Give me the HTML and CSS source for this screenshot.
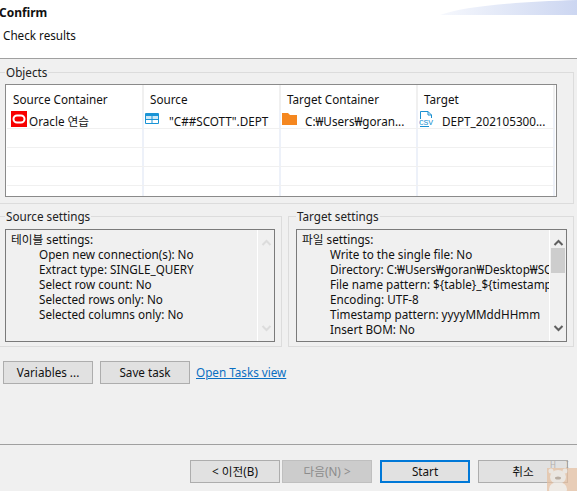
FILE: index.html
```html
<!DOCTYPE html>
<html lang="ko">
<head>
	<meta charset="utf-8">
	<title>Confirm</title>
	<link rel="stylesheet" href="styles.css">
</head>
<body>
	<!-- Wizard header -->
	<header class="head">
		<svg class="head-art" width="137" height="15" viewBox="0 0 137 15">
			<defs>
				<linearGradient id="swoosh" x1="0" y1="0" x2="1" y2="0">
					<stop offset="0" stop-color="#f6f8fd"/>
					<stop offset="1" stop-color="#ccd6f1"/>
				</linearGradient>
			</defs>
			<path d="M0 15C22 7 70 2 137 0V15Z" fill="url(#swoosh)"/>
		</svg>
		<div class="head-title">Confirm</div>
		<div class="head-sub">Check results</div>
	</header>

	<main class="body">
		<fieldset class="group group-objects">
			<legend>Objects</legend>
			<div class="grid">
				<div class="grid-row grid-head">
					<div class="cell">Source Container</div>
					<div class="cell">Source</div>
					<div class="cell">Target Container</div>
					<div class="cell">Target</div>
				</div>
				<div class="grid-row grid-row-data">
					<div class="cell cell-first">
						<svg class="ico" width="16" height="16" viewBox="0 0 16 16"><rect width="16" height="16" fill="#f80000"/><rect x="2.500" y="4.500" width="11" height="7" rx="3.500" fill="none" stroke="#fff" stroke-width="2"/></svg>
						<span class="cell-text">Oracle 연습</span>
					</div>
					<div class="cell cell-table">
						<svg class="ico" width="14" height="12" viewBox="0 0 14 12"><rect width="14" height="11" rx="1" fill="#1a94d6"/><rect x="1" y="3" width="5.500" height="3" fill="#cfe9f8"/><rect x="7.500" y="3" width="5.500" height="3" fill="#cfe9f8"/><rect x="1" y="7" width="5.500" height="3" fill="#fff"/><rect x="7.500" y="7" width="5.500" height="3" fill="#fff"/></svg>
						<span class="cell-text">"C##SCOTT".DEPT</span>
					</div>
					<div class="cell cell-folder">
						<svg class="ico" width="15" height="12" viewBox="0 0 15 12"><path d="M0 0H6L8 2H15V12H0Z" fill="#f5871f"/></svg>
						<span class="cell-text">C:₩Users₩goran...</span>
					</div>
					<div class="cell cell-csv">
						<svg class="ico" width="16" height="16" viewBox="0 0 16 16" fill="none" stroke="#1a8fd1"><path d="M1.500 8V.5H9L12.500 4V7M9 .5V4H12.500"/><text x="0" y="13.500" font-size="8" font-family="Liberation Mono" letter-spacing="-.2" fill="#1a8fd1" stroke="none">CSV</text><path d="M1 15.500H10"/></svg>
						<span class="cell-text">DEPT_202105300...</span>
					</div>
				</div>
				<div class="grid-row"><div class="cell"></div><div class="cell"></div><div class="cell"></div><div class="cell"></div></div>
				<div class="grid-row"><div class="cell"></div><div class="cell"></div><div class="cell"></div><div class="cell"></div></div>
				<div class="grid-row"><div class="cell"></div><div class="cell"></div><div class="cell"></div><div class="cell"></div></div>
				<div class="grid-row grid-row-last"><div class="cell"></div><div class="cell"></div><div class="cell"></div><div class="cell"></div></div>
			</div>
		</fieldset>

		<div class="settings">
			<fieldset class="group group-source">
				<legend>Source settings</legend>
				<div class="textbox">
					<div class="textbox-text">
						<div>테이블 settings:</div>
						<div class="ind">Open new connection(s): No</div>
						<div class="ind">Extract type: SINGLE_QUERY</div>
						<div class="ind">Select row count: No</div>
						<div class="ind">Selected rows only: No</div>
						<div class="ind">Selected columns only: No</div>
					</div>
					<div class="scroll scroll-off">
						<svg width="15" height="10" viewBox="0 0 15 10"><path d="M3.500 7L7.500 3L11.500 7" fill="none" stroke="#dcdcdc" stroke-width="2"/></svg>
						<svg width="15" height="10" viewBox="0 0 15 10"><path d="M3.500 3L7.500 7L11.500 3" fill="none" stroke="#dcdcdc" stroke-width="2"/></svg>
					</div>
				</div>
			</fieldset>
			<fieldset class="group group-target">
				<legend>Target settings</legend>
				<div class="textbox">
					<div class="textbox-text">
						<div>파일 settings:</div>
						<div class="ind">Write to the single file: No</div>
						<div class="ind">Directory: C:₩Users₩goran₩Desktop₩SQL</div>
						<div class="ind">File name pattern: ${table}_${timestamp}</div>
						<div class="ind">Encoding: UTF-8</div>
						<div class="ind">Timestamp pattern: yyyyMMddHHmm</div>
						<div class="ind">Insert BOM: No</div>
					</div>
					<div class="scroll">
						<svg width="15" height="10" viewBox="0 0 15 10"><path d="M3.500 7L7.500 3L11.500 7" fill="none" stroke="#606060" stroke-width="2"/></svg>
						<div class="thumb"></div>
						<svg width="15" height="10" viewBox="0 0 15 10"><path d="M3.500 3L7.500 7L11.500 3" fill="none" stroke="#606060" stroke-width="2"/></svg>
					</div>
				</div>
			</fieldset>
		</div>

		<div class="actions">
			<button type="button" class="btn">Variables ...</button>
			<button type="button" class="btn">Save task</button>
			<a class="link" href="#">Open Tasks view</a>
		</div>
	</main>

	<!-- Wizard buttons -->
	<footer class="foot">
		<button type="button" class="btn">&lt; 이전(B)</button>
		<button type="button" class="btn btn-off" disabled>다음(N) &gt;</button>
		<button type="button" class="btn btn-default">Start</button>
		<button type="button" class="btn">취소</button>
	</footer>

	<!-- bit of the desktop wallpaper showing through at the corner -->
	<div class="corner">
		<div class="corner-letters">H I W</div>
		<svg class="corner-art" width="30" height="23" viewBox="0 0 30 23">
			<rect width="30" height="23" fill="#e6bf9f"/>
			<ellipse cx="11" cy="9" rx="8" ry="7" fill="#efe9e2"/>
			<ellipse cx="11" cy="21" rx="9" ry="7" fill="#efe9e2"/>
			<circle cx="4" cy="3" r="2.500" fill="#efe9e2"/>
			<circle cx="18" cy="3" r="2.500" fill="#efe9e2"/>
			<ellipse cx="11" cy="10" rx="3" ry="1.500" fill="#a89888"/>
		</svg>
	</div>
</body>
</html>
```

FILE: styles.css
```css
* {
	box-sizing: border-box;
}

html, body {
	margin: 0;
	height: 100%;
}

body {
	position: relative;
	width: 577px;
	height: 491px;
	overflow: hidden;
	font: normal 11.7px/15px "Noto Sans", "Noto Sans CJK KR", sans-serif;
	color: #111;
	background-color: #f0f0f0;
	display: flex;
	flex-direction: column;
}

.head {
	position: relative;
	height: 59px;
	flex: none;
	background-color: #fff;
	border-bottom: 1px solid #a0a0a0;
}

.head-art {
	position: absolute;
	top: 0;
	right: 0;
}

.head-title {
	margin: 5px 0 0 -1px;
	font-weight: bold;
	font-size: 12px;
	line-height: 16px;
	color: #111;
}

.head-sub {
	margin: 7px 0 0 3px;
}

.body {
	flex: 1;
	padding: 6px 3px 0 0;
}

.group {
	margin: 0;
	min-width: 0;
	border: 1px solid #dcdcdc;
	padding: 0;
}

.group legend {
	padding: 0 1px;
	line-height: 15px;
	color: #222;
}

.group-objects {
	height: 139px;
	margin-left: -1px;
	padding: 4px 16px 0 5px;
}

.grid {
	height: 113px;
	border: 1px solid #8a8a8a;
	background-color: #fff;
	padding: 0 1px;
	overflow: hidden;
}

.grid-row {
	display: grid;
	grid-template-columns: 137px 137px 137px 137px;
	height: 19px;
	border-bottom: 1px solid #f0f0f0;
}

.grid-head {
	height: 25px;
	border-bottom: 0;
}

.grid-row-last {
	border-bottom: 0;
}

.cell {
	display: flex;
	align-items: center;
	white-space: nowrap;
	padding-left: 1px;
	border-right: 2px solid #edf1f9;
}

.grid-head .cell {
	padding-left: 6px;
	padding-top: 4px;
	border-right-color: #f0f0f0;
}

.grid-row-data .cell-text {
	position: relative;
	top: 2px;
}

.cell-first {
	margin-left: -1px;
	padding-left: 5px;
	gap: 2px;
}

.cell-table .cell-text {
	margin-left: 10px;
}

.cell-folder .cell-text {
	margin-left: 8px;
}

.cell-csv .cell-text {
	margin-left: 7px;
}

.ico {
	flex: none;
}

.settings {
	display: flex;
	margin-top: 5px;
}

.group-source {
	width: 283px;
	margin-left: -1px;
	height: 138px;
	padding: 5px 6px 0 5px;
}

.group-target {
	width: 286px;
	margin-left: 6px;
	height: 138px;
	padding: 5px 6px 0 7px;
}

.textbox {
	display: flex;
	height: 113px;
	border: 1px solid #7a7a7a;
}

.textbox-text {
	flex: 1;
	min-width: 0;
	overflow: hidden;
	white-space: nowrap;
	padding: 2px 0 0 5px;
}

.ind {
	margin-left: 28px;
}

.scroll {
	width: 17px;
	flex: none;
	padding: 8px 1px;
	display: flex;
	flex-direction: column;
	align-items: center;
	justify-content: space-between;
	background-color: #f0f0f0;
	border-left: 1px solid #fff;
}

.scroll .thumb {
	align-self: stretch;
	height: 25px;
	margin-bottom: auto;
	background-color: #cdcdcd;
}

.actions {
	display: flex;
	align-items: center;
	gap: 7px;
	margin-top: 14px;
	padding-left: 3px;
}

.btn {
	width: 90px;
	height: 23px;
	padding: 0;
	font: inherit;
	color: #111;
	background-color: #e1e1e1;
	border: 1px solid #adadad;
	border-radius: 0;
}

.link {
	margin-left: -1px;
	color: #0a6fc2;
}

.foot {
	flex: none;
	height: 47px;
	border-top: 1px solid #a0a0a0;
	display: flex;
	align-items: flex-start;
	padding: 15px 0 0 190px;
	gap: 2px;
}

.btn-off {
	color: #8b8b8b;
	background-color: #cccccc;
	border-color: #bfbfbf;
}

.btn-default {
	margin-left: 6px;
	border: 2px solid #0078d7;
}

.foot .btn:last-child {
	margin-left: 6px;
}

.corner {
	position: absolute;
	right: 0;
	bottom: 0;
	width: 30px;
	height: 29px;
	opacity: 0.7;
	pointer-events: none;
}

.corner-letters {
	height: 6px;
	padding-left: 3px;
	font-size: 8px;
	line-height: 6px;
	letter-spacing: 4px;
	color: #a09a94;
	white-space: nowrap;
}

.corner-art {
	display: block;
}
```
